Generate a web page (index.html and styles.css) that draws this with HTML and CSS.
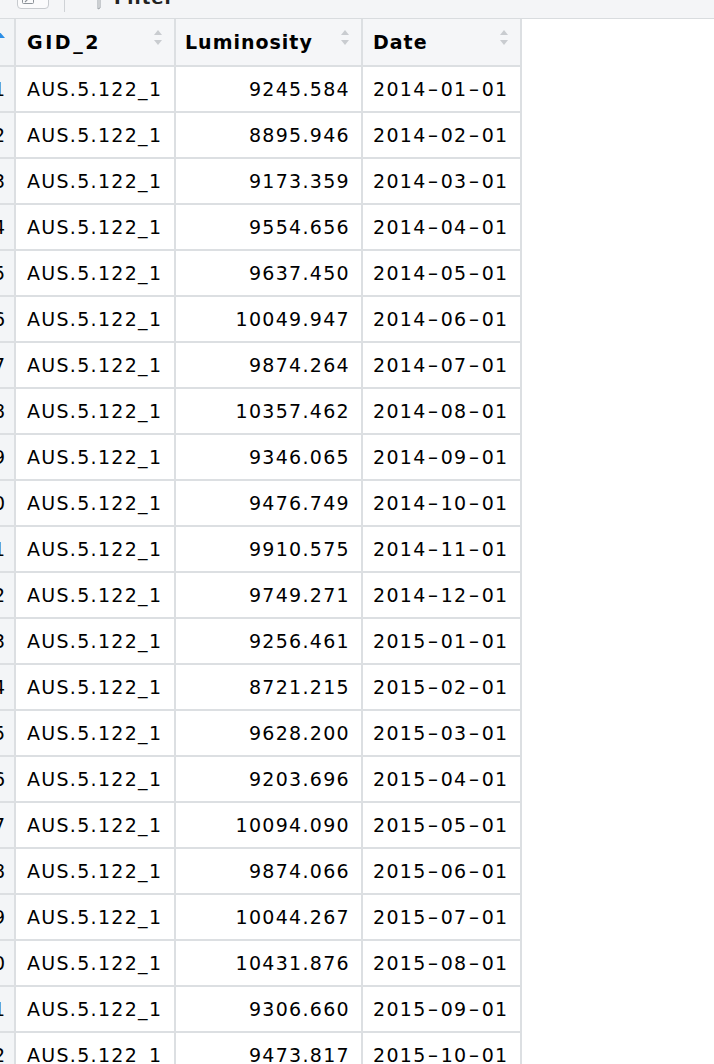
FILE: index.html
```html
<!DOCTYPE html>
<html>
<head>
<meta charset="utf-8">
<link rel="stylesheet" href="styles.css">
</head>
<body>
<div class="viewer">
  <div class="toolbar">
    <div class="tb-btn">
      <svg width="14" height="14" viewBox="0 0 14 14" class="tb-icon"><rect x="1.5" y="3.5" width="11" height="9" rx="1" fill="none" stroke="#8d9399" stroke-width="1"/><path d="M4 11 L9 6 M6 5.5 H9.5 V9" fill="none" stroke="#8d9399" stroke-width="1.2"/></svg>
    </div>
    <div class="tb-sep"></div>
    <svg class="funnel" width="14" height="30" viewBox="0 0 14 30"><path d="M1 2 H13 L8 12 V27 L6 28 V12 Z" fill="#fff" stroke="#9aa0a6" stroke-width="1"/></svg>
    <span class="tb-label">Filter</span>
  </div>
  <div class="grid">
    <div class="row head">
      <div class="cell num"><svg width="12" height="7" viewBox="0 0 12 7" class="asc"><path d="M6 0 L12 7 H0 Z" fill="#2b8ee6"/></svg></div>
      <div class="cell h">GID_2<svg class="sort" width="8" height="16" viewBox="0 0 8 16"><path d="M4 0 L8 5 H0 Z M0 10 H8 L4 15 Z" fill="#c9ccd0"/></svg></div>
      <div class="cell h">Luminosity<svg class="sort" width="8" height="16" viewBox="0 0 8 16"><path d="M4 0 L8 5 H0 Z M0 10 H8 L4 15 Z" fill="#c9ccd0"/></svg></div>
      <div class="cell h">Date<svg class="sort" width="8" height="16" viewBox="0 0 8 16"><path d="M4 0 L8 5 H0 Z M0 10 H8 L4 15 Z" fill="#c9ccd0"/></svg></div>
    </div>
    <div class="row"><div class="cell num">1</div><div class="cell id">AUS.5.122_1</div><div class="cell val">9245.584</div><div class="cell date">2014<span class="d">-</span>01<span class="d">-</span>01</div></div>
    <div class="row"><div class="cell num">2</div><div class="cell id">AUS.5.122_1</div><div class="cell val">8895.946</div><div class="cell date">2014<span class="d">-</span>02<span class="d">-</span>01</div></div>
    <div class="row"><div class="cell num">3</div><div class="cell id">AUS.5.122_1</div><div class="cell val">9173.359</div><div class="cell date">2014<span class="d">-</span>03<span class="d">-</span>01</div></div>
    <div class="row"><div class="cell num">4</div><div class="cell id">AUS.5.122_1</div><div class="cell val">9554.656</div><div class="cell date">2014<span class="d">-</span>04<span class="d">-</span>01</div></div>
    <div class="row"><div class="cell num">5</div><div class="cell id">AUS.5.122_1</div><div class="cell val">9637.450</div><div class="cell date">2014<span class="d">-</span>05<span class="d">-</span>01</div></div>
    <div class="row"><div class="cell num">6</div><div class="cell id">AUS.5.122_1</div><div class="cell val">10049.947</div><div class="cell date">2014<span class="d">-</span>06<span class="d">-</span>01</div></div>
    <div class="row"><div class="cell num">7</div><div class="cell id">AUS.5.122_1</div><div class="cell val">9874.264</div><div class="cell date">2014<span class="d">-</span>07<span class="d">-</span>01</div></div>
    <div class="row"><div class="cell num">8</div><div class="cell id">AUS.5.122_1</div><div class="cell val">10357.462</div><div class="cell date">2014<span class="d">-</span>08<span class="d">-</span>01</div></div>
    <div class="row"><div class="cell num">9</div><div class="cell id">AUS.5.122_1</div><div class="cell val">9346.065</div><div class="cell date">2014<span class="d">-</span>09<span class="d">-</span>01</div></div>
    <div class="row"><div class="cell num">10</div><div class="cell id">AUS.5.122_1</div><div class="cell val">9476.749</div><div class="cell date">2014<span class="d">-</span>10<span class="d">-</span>01</div></div>
    <div class="row"><div class="cell num">11</div><div class="cell id">AUS.5.122_1</div><div class="cell val">9910.575</div><div class="cell date">2014<span class="d">-</span>11<span class="d">-</span>01</div></div>
    <div class="row"><div class="cell num">12</div><div class="cell id">AUS.5.122_1</div><div class="cell val">9749.271</div><div class="cell date">2014<span class="d">-</span>12<span class="d">-</span>01</div></div>
    <div class="row"><div class="cell num">13</div><div class="cell id">AUS.5.122_1</div><div class="cell val">9256.461</div><div class="cell date">2015<span class="d">-</span>01<span class="d">-</span>01</div></div>
    <div class="row"><div class="cell num">14</div><div class="cell id">AUS.5.122_1</div><div class="cell val">8721.215</div><div class="cell date">2015<span class="d">-</span>02<span class="d">-</span>01</div></div>
    <div class="row"><div class="cell num">15</div><div class="cell id">AUS.5.122_1</div><div class="cell val">9628.200</div><div class="cell date">2015<span class="d">-</span>03<span class="d">-</span>01</div></div>
    <div class="row"><div class="cell num">16</div><div class="cell id">AUS.5.122_1</div><div class="cell val">9203.696</div><div class="cell date">2015<span class="d">-</span>04<span class="d">-</span>01</div></div>
    <div class="row"><div class="cell num">17</div><div class="cell id">AUS.5.122_1</div><div class="cell val">10094.090</div><div class="cell date">2015<span class="d">-</span>05<span class="d">-</span>01</div></div>
    <div class="row"><div class="cell num">18</div><div class="cell id">AUS.5.122_1</div><div class="cell val">9874.066</div><div class="cell date">2015<span class="d">-</span>06<span class="d">-</span>01</div></div>
    <div class="row"><div class="cell num">19</div><div class="cell id">AUS.5.122_1</div><div class="cell val">10044.267</div><div class="cell date">2015<span class="d">-</span>07<span class="d">-</span>01</div></div>
    <div class="row"><div class="cell num">20</div><div class="cell id">AUS.5.122_1</div><div class="cell val">10431.876</div><div class="cell date">2015<span class="d">-</span>08<span class="d">-</span>01</div></div>
    <div class="row"><div class="cell num">21</div><div class="cell id">AUS.5.122_1</div><div class="cell val">9306.660</div><div class="cell date">2015<span class="d">-</span>09<span class="d">-</span>01</div></div>
    <div class="row"><div class="cell num">22</div><div class="cell id">AUS.5.122_1</div><div class="cell val">9473.817</div><div class="cell date">2015<span class="d">-</span>10<span class="d">-</span>01</div></div>
  </div>
</div>
</body>
</html>
```

FILE: styles.css
```css
html, body {
  margin: 0;
  padding: 0;
  background: #ffffff;
}
body {
  font-family: "DejaVu Sans", "Noto Sans", sans-serif;
  color: #000;
  width: 714px;
  height: 1064px;
  overflow: hidden;
}
.viewer {
  width: 714px;
  height: 1064px;
  overflow: hidden;
}
.toolbar {
  height: 40px;
  margin-top: -21px;
  background: #f4f5f7;
  border-bottom: 1px solid #d9dcdf;
  display: flex;
  align-items: flex-start;
  box-sizing: border-box;
}
.tb-btn {
  margin-left: 17px;
  margin-top: 2px;
  width: 32px;
  height: 28px;
  box-sizing: border-box;
  border: 1px solid #c7cace;
  border-radius: 4px;
  background: #fbfbfc;
  display: flex;
  align-items: flex-end;
  padding: 0 0 3px 3px;
}
.tb-sep {
  width: 1px;
  height: 33px;
  background: #cfd2d6;
  margin-left: 15px;
}
.funnel {
  margin-left: 27px;
  margin-top: 2px;
}
.tb-label {
  font-size: 18px;
  font-weight: bold;
  letter-spacing: 1px;
  color: #222;
  margin-left: 8px;
  line-height: 1;
  margin-top: 10px;
}
.grid {
  margin-left: -25px;
}
.row {
  display: grid;
  grid-template-columns: 41px 160px 187px 159px;
  height: 46px;
}
.row.head {
  height: 48px;
}
.cell {
  box-sizing: border-box;
  border-right: 2px solid #dcdfe2;
  border-bottom: 2px solid #dcdfe2;
  font-size: 19px;
  letter-spacing: 1.3px;
  display: flex;
  align-items: center;
  white-space: nowrap;
  overflow: hidden;
}
.head .cell {
  background: #f5f6f8;
  font-weight: bold;
  letter-spacing: 1px;
  justify-content: space-between;
  padding-left: 11px;
  padding-right: 12px;
}
.head .cell:nth-child(2) {
  letter-spacing: 2.6px;
}
.head .cell:nth-child(3) {
  padding-left: 9px;
}
.head .cell:nth-child(4) {
  padding-left: 10px;
}
.head .cell.num {
  background: #f2f4f6;
  justify-content: flex-end;
  padding: 0 9px 0 0;
  align-items: flex-start;
}
.asc {
  margin-top: 12px;
}
.sort {
  flex: none;
  margin-top: -9px;
}
.cell.num {
  background: #f3f5f7;
  justify-content: flex-end;
  padding-right: 9px;
  letter-spacing: 0;
}
.cell.id {
  padding-left: 11px;
}
.cell.val {
  justify-content: flex-end;
  padding-right: 11px;
}
.cell.date {
  padding-left: 10px;
}
.d {
  display: inline-block;
  margin: 0 3px;
  transform: scaleX(1.6);
}
```
